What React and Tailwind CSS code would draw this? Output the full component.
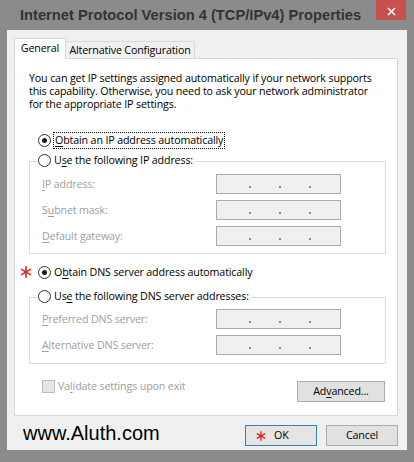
import React from "react";

function Radio({ checked }) {
  return (
    <span className="w-[13px] h-[13px] rounded-full border border-[#333333] bg-white flex items-center justify-center shrink-0">
      {checked && <span className="w-[5px] h-[5px] rounded-full bg-[#1a1a1a]" />}
    </span>
  );
}

function Star({ size = 12 }) {
  return (
    <svg width={size} height={size} viewBox="0 0 12 12" className="shrink-0">
      <g stroke="#e3202a" strokeWidth="1.6" strokeLinecap="round">
        <line x1="6" y1="0.8" x2="6" y2="11.2" />
        <line x1="1.5" y1="3.4" x2="10.5" y2="8.6" />
        <line x1="1.5" y1="8.6" x2="10.5" y2="3.4" />
      </g>
    </svg>
  );
}

function IpBox() {
  return (
    <div className="w-[125px] h-[20px] border border-[#ababab] bg-[#f0f0f0] flex items-end pb-[5px] pl-[32px] gap-[28px]">
      <span className="w-[2px] h-[2px] bg-[#8a8a8a]" />
      <span className="w-[2px] h-[2px] bg-[#8a8a8a]" />
      <span className="w-[2px] h-[2px] bg-[#8a8a8a]" />
    </div>
  );
}

function FieldRow({ children }) {
  return (
    <div className="flex items-center h-[20px]">
      <div className="w-[174px] text-[#a0a0a0] whitespace-nowrap">{children}</div>
      <IpBox />
    </div>
  );
}

export default function App() {
  return (
    <div className="w-[414px] h-[462px] bg-[#8b8b8b] flex flex-col font-['Open_Sans','Noto_Sans',sans-serif] text-[10.7px] tracking-[-0.15px] text-black overflow-hidden">
      {/* title bar */}
      <div className="h-[30px] flex items-start shrink-0">
        <div className="pl-[20px] pt-[7px] leading-[17px] text-[14.7px] tracking-normal font-bold text-[#333333] font-['Liberation_Sans',Arial,sans-serif] whitespace-nowrap">
          Internet Protocol Version 4 (TCP/IPv4) Properties
        </div>
        <div className="ml-auto mr-[8px] w-[30px] h-[20px] bg-[#c75050] flex items-center justify-center pt-[2px]">
          <svg width="9" height="9" viewBox="0 0 9 9">
            <g stroke="#ffffff" strokeWidth="1.5">
              <line x1="1" y1="1" x2="8" y2="8" />
              <line x1="8" y1="1" x2="1" y2="8" />
            </g>
          </svg>
        </div>
      </div>

      {/* client */}
      <div className="mx-[7px] h-[420px] bg-[#f0f0f0] flex flex-col pl-[7px] pr-[9px] pt-[8px] shrink-0">
        {/* tabs */}
        <div className="flex items-end -mb-[1px] relative z-10">
          <div className="h-[21px] w-[52px] bg-white border border-b-0 border-[#d9d9d9] flex items-center justify-center pb-[1px] whitespace-nowrap">
            General
          </div>
          <div className="h-[18px] w-[129px] bg-[#f0f0f0] border border-l-0 border-[#d9d9d9] flex items-center justify-center whitespace-nowrap">
            Alternative Configuration
          </div>
        </div>

        {/* pane */}
        <div className="h-[358px] bg-white border border-[#d9d9d9] flex flex-col pl-[14px] pr-[11px] pt-[13px]">
          <p className="leading-[13px] whitespace-nowrap">
            You can get IP settings assigned automatically if your network supports
            <br />
            this capability. Otherwise, you need to ask your network administrator
            <br />
            for the appropriate IP settings.
          </p>

          <div className="mt-[20px] ml-[9px] h-[18px] flex items-center gap-[2px]">
            <Radio checked />
            <span className="border border-dotted border-black px-[1px] leading-[15px] whitespace-nowrap">
              <u className="underline-offset-2">O</u>btain an IP address automatically
            </span>
          </div>

          <div className="mt-[2px] ml-[9px] h-[18px] flex items-center gap-[3px] relative z-10 bg-white w-fit pr-[2px]">
            <Radio />
            <span className="whitespace-nowrap">
              U<u className="underline-offset-2">s</u>e the following IP address:
            </span>
          </div>
          <div className="-mt-[8px] border border-[#dcdcdc] flex flex-col gap-[6px] pl-[12px] pt-[12px] pb-[7px]">
            <FieldRow>
              <u className="underline-offset-2">I</u>P address:
            </FieldRow>
            <FieldRow>
              S<u className="underline-offset-2">u</u>bnet mask:
            </FieldRow>
            <FieldRow>
              <u className="underline-offset-2">D</u>efault gateway:
            </FieldRow>
          </div>

          <div className="mt-[9px] ml-[9px] h-[18px] flex items-center gap-[3px]">
            <span className="-ml-[18px] mr-[3px] flex items-center">
              <Star size={12} />
            </span>
            <Radio checked />
            <span className="whitespace-nowrap">
              O<u className="underline-offset-2">b</u>tain DNS server address automatically
            </span>
          </div>

          <div className="mt-[6px] ml-[9px] h-[18px] flex items-center gap-[3px] relative z-10 bg-white w-fit pr-[2px]">
            <Radio />
            <span className="whitespace-nowrap">
              Us<u className="underline-offset-2">e</u> the following DNS server addresses:
            </span>
          </div>
          <div className="-mt-[8px] border border-[#dcdcdc] flex flex-col gap-[6px] pl-[12px] pt-[11px] pb-[8px]">
            <FieldRow>
              <u className="underline-offset-2">P</u>referred DNS server:
            </FieldRow>
            <FieldRow>
              <u className="underline-offset-2">A</u>lternative DNS server:
            </FieldRow>
          </div>

          <div className="mt-[17px] flex items-start justify-between">
            <div className="ml-[13px] -mt-[1px] flex items-center gap-[3px] h-[13px]">
              <span className="w-[13px] h-[13px] border border-[#bcbcbc] bg-[#e6e6e6]" />
              <span className="text-[#a0a0a0] whitespace-nowrap">
                Va<u className="underline-offset-2">l</u>idate settings upon exit
              </span>
            </div>
            <div className="w-[88px] h-[21px] mr-[1px] border border-[#adadad] bg-[#e1e1e1] flex items-center justify-center">
              <span className="whitespace-nowrap">
                Ad<u className="underline-offset-2">v</u>anced...
              </span>
            </div>
          </div>
        </div>

        {/* bottom */}
        <div className="mt-[9px] h-[21px] flex items-center">
          <div className="ml-[9px] text-[20px] leading-[21px] tracking-normal font-['Liberation_Sans',Arial,sans-serif] -mt-[5px] whitespace-nowrap">
            www.Aluth.com
          </div>
          <div className="ml-auto w-[72px] h-[21px] border border-[#3c7fb1] bg-[#e5e5e5] flex items-center pl-[10px] gap-[8px]">
            <Star size={10} />
            <span>OK</span>
          </div>
          <div className="ml-[9px] w-[72px] h-[21px] border border-[#adadad] bg-[#e1e1e1] flex items-center justify-center">
            Cancel
          </div>
        </div>
      </div>
    </div>
  );
}
